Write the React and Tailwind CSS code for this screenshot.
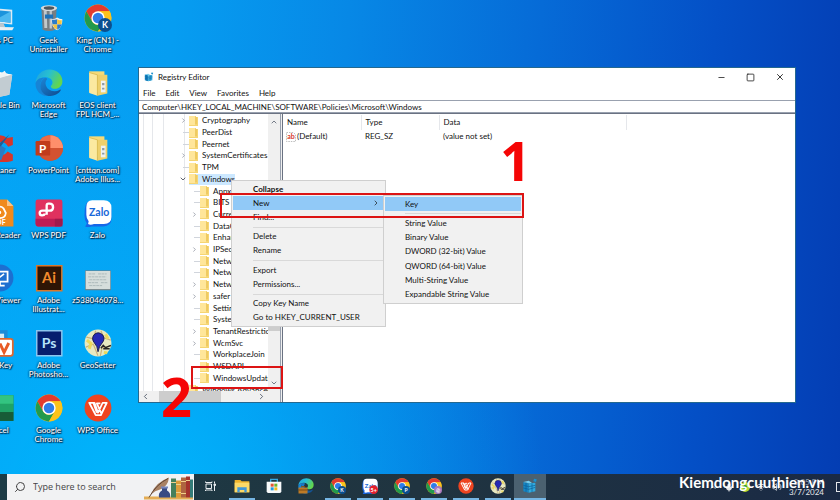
import { ChevronDown, ChevronLeft, ChevronRight, ChevronUp, Mic, Minus, Search, Square, Volume2, Wifi, X } from 'lucide-react';

/* ---------- app icons ---------- */

function Chrome({ badge, badgeFill = '#0b4f8f' }) {
  return (
    <svg viewBox="0 0 48 48" className="size-full">
      <circle cx="24" cy="24" r="23" fill="#fbc116" />
      <path d="M4.1 12.5A23 23 0 0 1 43.9 12.5L24 12.5L14 29.8Z" fill="#e33b2e" />
      <path d="M4.1 12.5A23 23 0 0 0 24 47L34 29.7A11.5 11.5 0 0 1 14 29.8Z" fill="#229a4c" />
      <path d="M43.9 12.5H24A11.5 11.5 0 0 1 34 29.7L24 47A23 23 0 0 0 43.9 12.5Z" fill="#fcc31c" />
      <circle cx="24" cy="24" r="11.5" fill="#fff" />
      <circle cx="24" cy="24" r="9" fill="#2f7de8" />
      {badge && (
        <>
          <circle cx="36" cy="36" r="12" fill={badgeFill} />
          <text x="36" y="41" textAnchor="middle" fontSize="15" fontWeight="700" fill="#fff">{badge}</text>
        </>
      )}
    </svg>
  );
}

function Edge() {
  return (
    <svg viewBox="0 0 48 48" className="size-full">
      <defs>
        <linearGradient id="edgeTop" x1="0" y1="0" x2="1" y2="0.4">
          <stop offset="0" stopColor="#1f9fe0" />
          <stop offset="0.5" stopColor="#27bfd2" />
          <stop offset="1" stopColor="#62d64f" />
        </linearGradient>
        <linearGradient id="edgeLow" x1="0" y1="0" x2="1" y2="1">
          <stop offset="0" stopColor="#1b86d8" />
          <stop offset="1" stopColor="#104a8c" />
        </linearGradient>
      </defs>
      <path d="M1 24C2 10 12 1 25 1c13 0 22 9 22 20 0 8-6 13-13 13-5 0-7-2-7-4s3-3 3-7c0-5-5-9-12-9C9 14 3 18 1 24Z" fill="url(#edgeTop)" />
      <path d="M1 24c2-6 8-10 16-9-5 2-8 7-8 13 0 10 8 18 18 18C12 49 0 38 1 24Z" fill="#1784d6" />
      <path d="M17 15c-6 4-8 9-8 14 0 11 10 19 20 17 7-1 13-5 15-9 1-2-1-2-2-1-9 5-23 1-24-11 0-3 1-6 3-8-1-1-2-2-4-2Z" fill="url(#edgeLow)" />
    </svg>
  );
}

function ThisPc() {
  return (
    <svg viewBox="0 0 48 48" className="size-full">
      <path d="M4 6l41 4v25L4 31z" fill="#dcebf4" />
      <path d="M7 9l35 4v19L7 28z" fill="#1b93dc" />
      <path d="M12 29L42 13v19z" fill="#4bb8f0" />
      <path d="M18 32l12 1 3 7H14z" fill="#b9c6ce" />
      <path d="M6 39l42 1-3 5H3z" fill="#e9eff2" />
    </svg>
  );
}

function Geek() {
  return (
    <svg viewBox="0 0 48 48" className="size-full">
      <path d="M11 7h26l-2 37q-11 5-22 0z" fill="#777e83" />
      <path d="M15 11h5l1 30h-5zM25 11h4v31h-4z" fill="#c1c8cb" />
      <ellipse cx="24" cy="7" rx="14" ry="5" fill="#d6dadc" />
      <ellipse cx="24" cy="7" rx="9" ry="3" fill="#4c565d" />
      <path d="M17 18h14v7H17z" fill="#1d72bb" />
      <path d="M28 26q7 0 10-3 4 3 9 3 0 14-9 19-10-5-10-19z" fill="#f3f3f3" />
      <path d="M38 26v9h-8q-1-3-1-8 5 0 9-1z" fill="#2c7bc9" />
      <path d="M38 26q4 2 8 2l-.5 7H38zM30 35h8v9q-6-3-8-9z" fill="#f6c33a" />
      <path d="M38 35h8q-2 6-8 9z" fill="#2c7bc9" />
    </svg>
  );
}

function RecycleBin() {
  return (
    <svg viewBox="0 0 48 48" className="size-full">
      <path d="M3 10l18-5 24 5-5 34-19 4-13-5z" fill="#dce4e8" />
      <path d="M3 10l19 5 23-5-24-5z" fill="#f9fbfc" />
      <path d="M22 15l23-5-5 34-19 4z" fill="#c2ccd2" />
      <path d="M10 13l7-8 7 4 8-6 5 8-15 5z" fill="#eef3f5" />
    </svg>
  );
}

function ZipFolder() {
  return (
    <svg viewBox="0 0 48 48" className="size-full">
      <path d="M9 4h26v36H9z" fill="#f4da79" />
      <path d="M9 6l14 4v36L9 41z" fill="#fbe9a0" />
      <path d="M23 10h17v32l-17 4z" fill="#eed06b" />
      <path d="M29 20h8v20h-8z" fill="#edf2f3" />
      <path d="M31 24h4v4h-4zM31 32h4v3h-4z" fill="#8f9ba2" />
      <path d="M9 6l14 4v36" fill="none" stroke="#d9b950" strokeWidth="1.5" />
    </svg>
  );
}

function CCleaner() {
  return (
    <svg viewBox="0 0 48 48" className="size-full">
      <path d="M46 5v14l-8 3q-5-9-13-8-11 2-10 12 1 9 11 10 7 0 11-6l9 5v11q-9 3-20 2Q2 46 1 25 3 4 24 2q7 0 12 5z" fill="#d6362b" />
      <path d="M40 1L25 22l-8 21-5-2 7-21z" fill="#225d94" />
      <path d="M26 20l8 5-8 20-16-7z" fill="#2b7bc0" />
    </svg>
  );
}

function PowerPoint() {
  return (
    <svg viewBox="0 0 48 48" className="size-full">
      <circle cx="26" cy="24" r="22" fill="#d35230" />
      <path d="M26 2a22 22 0 0 1 22 22H26z" fill="#ff8f6b" />
      <path d="M4 24h44a22 22 0 0 1-44 0z" fill="#d35230" />
      <path d="M4 24a22 22 0 0 1 22-22v22z" fill="#ed6c47" />
      <rect x="1" y="12" width="25" height="25" rx="2" fill="#c13b1b" />
      <text x="13" y="32" textAnchor="middle" fontSize="20" fontWeight="700" fill="#fff">P</text>
    </svg>
  );
}

function FoxitReader() {
  return (
    <svg viewBox="0 0 48 48" className="size-full">
      <path d="M2 1h34l11 11v35H2z" fill="#f08a1d" />
      <path d="M36 1l11 11H36z" fill="#fbc486" />
      <path d="M9 14q4 3 9 1 7-4 12 1l4 8q-1 9-11 9-13 0-14-19z" fill="none" stroke="#fff" strokeWidth="3" />
      <circle cx="23" cy="23" r="3" fill="#fff" />
      <text x="22" y="45" textAnchor="middle" fontSize="12" fontWeight="700" fill="#fff">PDF</text>
    </svg>
  );
}

function WpsPdf() {
  return (
    <svg viewBox="0 0 48 48" className="size-full">
      <rect x="1" y="1" width="46" height="46" rx="4" fill="#e0315f" />
      <path d="M1 34h46v9q0 4-4 4H5q-4 0-4-4z" fill="#bd1c54" />
      <path d="M34 34h13v13H34z" fill="#9e1a4c" />
      <path d="M20 27V11q0-3 3-3h2q6 0 6 6t-6 6h-12q-5 0-5 4t4 4q4 0 5-3" fill="none" stroke="#fff" strokeWidth="4" />
    </svg>
  );
}

function Zalo({ badge }) {
  return (
    <svg viewBox="0 0 48 48" className="size-full">
      <path d="M8 4h28q11 2 11 14v16q0 13-14 13H13q-7 2-11 0l3-5Q0 36 1 25 1 7 8 4z" fill="#1767e8" />
      <path d="M14 2h20q13 0 13 13v16q0 12-13 12H17q-6 2-10 0l1-5q-4-4-4-11V14Q4 2 14 2z" fill="#fff" />
      <text x="26" y="29" textAnchor="middle" fontSize="18" fontWeight="700" fill="#1767d8">Zalo</text>
      {badge && (
        <>
          <circle cx="35" cy="35" r="13" fill="#e5202c" />
          <text x="35" y="41" textAnchor="middle" fontSize="16" fontWeight="700" fill="#fff">{badge}</text>
        </>
      )}
    </svg>
  );
}

function UltraViewer() {
  return (
    <svg viewBox="0 0 48 48" className="size-full">
      <circle cx="24" cy="24" r="23" fill="#1d6fd0" />
      <path d="M11 13h26v17H11z" fill="none" stroke="#fff" strokeWidth="3" />
      <path d="M24 30v7M16 37h16M19 26l12-9" stroke="#fff" strokeWidth="3" />
    </svg>
  );
}

function Illustrator() {
  return (
    <svg viewBox="0 0 48 48" className="size-full">
      <path d="M3 3h43v43H3z" fill="#2e1505" stroke="#d9772a" strokeWidth="2.500" />
      <text x="24" y="33" textAnchor="middle" fontSize="25" fontWeight="700" fill="#f28a2c">Ai</text>
    </svg>
  );
}

function Photoshop() {
  return (
    <svg viewBox="0 0 48 48" className="size-full">
      <path d="M3 3h43v43H3z" fill="#061e6e" stroke="#8cc6ee" strokeWidth="2.500" />
      <text x="24" y="32" textAnchor="middle" fontSize="24" fontWeight="700" fill="#b5e2fb">Ps</text>
    </svg>
  );
}

function PhotoFile() {
  return (
    <svg viewBox="0 0 48 48" className="size-full">
      <path d="M2 11h44v34H2z" fill="#70828a" />
      <path d="M3 12h42v31H3z" fill="#d6dedc" />
      <path d="M8 17h12M24 17h15M7 22h31M9 27h29M7 32h18M29 32h11M9 37h22" stroke="#a8b6b7" strokeWidth="1.500" strokeDasharray="5 1" />
    </svg>
  );
}

function UniKey() {
  return (
    <svg viewBox="0 0 48 48" className="size-full">
      <path d="M8 2h29v28H8z" fill="#1a8bd8" />
      <path d="M14 8h17v16H14z" fill="#d4edf8" />
      <rect x="18" y="17" width="28" height="29" rx="4" fill="#fff" stroke="#e1672e" strokeWidth="3" />
      <path d="M24 25l7 15 8-16" fill="none" stroke="#e85b25" strokeWidth="5" />
    </svg>
  );
}

function GeoSetter() {
  return (
    <svg viewBox="0 0 48 48" className="size-full">
      <circle cx="24" cy="24" r="23" fill="#e8e9c2" />
      <path d="M4 14l12 3 4-14M3 31l13-5 8 20M29 3l5 12 12 4M28 46l3-14 16-3" fill="none" stroke="#cbb27d" strokeWidth="2" />
      <path d="M5 19l7 6-3 9M37 9l4 8M34 40l6 1" fill="none" stroke="#ecd95c" strokeWidth="5" />
      <path d="M24 39q-1-10-6-15-6-7-1-14 7-7 15 0 5 7-1 14-5 5-7 15z" fill="#2629b5" stroke="#121546" strokeWidth="1.500" />
      <path d="M29 33l4-5 4 4 9-4M33 34h11" fill="none" stroke="#252525" strokeWidth="2.500" />
    </svg>
  );
}

function Excel() {
  return (
    <svg viewBox="0 0 48 48" className="size-full">
      <path d="M1 2h46v44H1z" fill="#107c41" />
      <path d="M24 2h23v15H24z" fill="#33c481" />
      <path d="M24 17h23v14H24z" fill="#21a366" />
      <path d="M24 31h23v15H24z" fill="#185c37" />
    </svg>
  );
}

function WpsOffice() {
  return (
    <svg viewBox="0 0 48 48" className="size-full">
      <circle cx="24" cy="24" r="23" fill="#ee4420" />
      <path d="M9 15h9l6 17 8-17h7L29 36h-9zM16 15l6 17M28 16h-6l8 18" fill="none" stroke="#fff" strokeWidth="3" strokeLinejoin="round" />
    </svg>
  );
}

function TaskView() {
  return (
    <svg viewBox="0 0 24 24" className="size-full" fill="none" stroke="#e8edf0" strokeWidth="2">
      <path d="M4 8h11v9H4zM3 3v2h13V3M3 22v-2h13v2M21 3v4M21 12v10" />
      <path d="M20 8h3v3h-3z" fill="#e8edf0" />
    </svg>
  );
}

function Explorer() {
  return (
    <svg viewBox="0 0 48 48" className="size-full">
      <path d="M2 6h17l4 4h23v33H2z" fill="#eeb32c" />
      <path d="M2 14h44v29H2z" fill="#fbd968" />
      <path d="M10 28h28v15h-7v-7H17v7h-7z" fill="#3f97d8" />
    </svg>
  );
}

function Store() {
  return (
    <svg viewBox="0 0 48 48" className="size-full">
      <path d="M14 12V4h20v8" fill="none" stroke="#38a9e0" strokeWidth="4" />
      <path d="M2 11h44v29q0 5-5 5H7q-5 0-5-5z" fill="#f8fafb" />
      <path d="M14 17h9v9h-9z" fill="#e75432" />
      <path d="M25 17h9v9h-9z" fill="#70b52b" />
      <path d="M14 28h9v9h-9z" fill="#219ce0" />
      <path d="M25 28h9v9h-9z" fill="#f5b91c" />
    </svg>
  );
}

function EdgeWork() {
  return (
    <span className="relative block size-full">
      <Edge />
      <svg viewBox="0 0 20 16" className="absolute bottom-0 left-0 h-2 w-2.5">
        <path d="M7 3V1h6v2" fill="none" stroke="#8a5413" strokeWidth="2" />
        <path d="M1 3h18v12H1z" fill="#bd7a26" />
        <path d="M1 8h18" stroke="#7a4a14" strokeWidth="2" />
      </svg>
    </span>
  );
}

function Regedit() {
  return (
    <svg viewBox="0 0 24 24" className="size-full">
      <path d="M2 6l8 2v14l-8-2z" fill="#1686c4" />
      <path d="M10 8l10-1v13l-10 2z" fill="#31a9dd" />
      <path d="M2 6l8-2 5 3-5 1z" fill="#76cdee" />
      <path d="M2 11l8 2 10-2M2 15l8 2 10-3M6 7v14M15 8v13" fill="none" stroke="#0b5f98" strokeWidth="1" />
      <path d="M18 1l4 1-1 4-4-1z" fill="#1d90cd" />
    </svg>
  );
}

function StringValue() {
  return (
    <svg viewBox="0 0 20 20" className="size-2.5 shrink-0">
      <path d="M1 1h14l4 4v14H1z" fill="#fff" stroke="#a8a8a8" strokeWidth="1.500" strokeDasharray="3 2" />
      <text x="10" y="14" textAnchor="middle" fontSize="14" fontWeight="700" fill="#d8362a">ab</text>
    </svg>
  );
}

function SearchArt() {
  return (
    <svg viewBox="0 0 50 25" className="h-full w-[50px]">
      <path d="M0 22h49v3H0z" fill="#e4ad55" />
      <path d="M7 20Q11 8 25 3q-1 9-9 12-5 1-9 5z" fill="#a98264" />
      <path d="M5 23Q12 10 24 4" fill="none" stroke="#604535" strokeWidth="1" />
      <path d="M18 13h5v3q4 2 3 7H15q-1-5 3-7z" fill="#384b83" />
      <path d="M17 12h7v2h-7z" fill="#7586bd" />
      <path d="M27 4h5v19h-5z" fill="#45805c" />
      <path d="M32 6h5v17h-5z" fill="#dd9c3a" />
      <path d="M37 3h5v20h-5z" fill="#ae6540" />
      <path d="M42 2h4v21h-4z" fill="#a5332d" />
      <path d="M46 5h3v18h-3z" fill="#347c78" />
      <path d="M27 8h5M32 10h5M37 7h5M42 6h4M32 18h5M37 19h5" stroke="#f0d18c" strokeWidth="1" />
    </svg>
  );
}

/* ---------- data ---------- */

const shortcuts = [
  { icon: <ThisPc />, label: ['This PC'] },
  { icon: <Geek />, label: ['Geek', 'Uninstaller'] },
  { icon: <Chrome badge="K" />, label: ['King (CN1) -', 'Chrome'] },
  { icon: <RecycleBin />, label: ['Recycle Bin'] },
  { icon: <Edge />, label: ['Microsoft', 'Edge'] },
  { icon: <ZipFolder />, label: ['EOS client', 'FPL HCM_...'] },
  { icon: <CCleaner />, label: ['CCleaner'] },
  { icon: <PowerPoint />, label: ['PowerPoint'] },
  { icon: <ZipFolder />, label: ['[cnttqn.com]', 'Adobe Illus...'] },
  { icon: <FoxitReader />, label: ['PDF Reader'] },
  { icon: <WpsPdf />, label: ['WPS PDF'] },
  { icon: <Zalo />, label: ['Zalo'] },
  { icon: <UltraViewer />, label: ['UltraViewer'] },
  { icon: <Illustrator />, label: ['Adobe', 'Illustrat...'] },
  { icon: <PhotoFile />, label: ['z538046078...'] },
  { icon: <UniKey />, label: ['UniKey'] },
  { icon: <Photoshop />, label: ['Adobe', 'Photosho...'] },
  { icon: <GeoSetter />, label: ['GeoSetter'] },
  { icon: <Excel />, label: ['Excel'] },
  { icon: <Chrome />, label: ['Google', 'Chrome'] },
  { icon: <WpsOffice />, label: ['WPS Office'] },
];

const keys = [
  { name: 'Cryptography', more: true },
  { name: 'PeerDist' },
  { name: 'Peernet' },
  { name: 'SystemCertificates', more: true },
  { name: 'TPM' },
  { name: 'Windows', open: true },
  { name: 'Appx', child: true },
  { name: 'BITS', child: true },
  { name: 'CurrentVersion', child: true, more: true },
  { name: 'DataCollection', child: true },
  { name: 'EnhancedStorage', child: true },
  { name: 'IPSec', child: true, more: true },
  { name: 'Network Connect', child: true },
  { name: 'NetworkConnect', child: true },
  { name: 'NetworkProvider', child: true, more: true },
  { name: 'safer', child: true, more: true },
  { name: 'SettingSync', child: true },
  { name: 'System', child: true },
  { name: 'TenantRestrictions', child: true, more: true },
  { name: 'WcmSvc', child: true, more: true },
  { name: 'WorkplaceJoin', child: true },
  { name: 'WSDAPI', child: true },
  { name: 'WindowsUpdate', child: true },
  { name: 'Windows Advanced', more: true },
];

const contextItems = ['Collapse', 'New', 'Find...', '-', 'Delete', 'Rename', '-', 'Export', 'Permissions...', '-', 'Copy Key Name', 'Go to HKEY_CURRENT_USER'];
const newItems = ['Key', '-', 'String Value', 'Binary Value', 'DWORD (32-bit) Value', 'QWORD (64-bit) Value', 'Multi-String Value', 'Expandable String Value'];

const pinned = [
  { name: 'Task View', icon: <TaskView />, size: 'size-3' },
  { name: 'File Explorer', icon: <Explorer />, running: true },
  { name: 'Microsoft Store', icon: <Store /> },
  { name: 'Microsoft Edge', icon: <EdgeWork /> },
  { name: 'Chrome K', icon: <Chrome badge="K" />, running: true },
  { name: 'Zalo', icon: <Zalo badge="5+" />, running: true },
  { name: 'Chrome P', icon: <Chrome badge="P" />, running: true },
  { name: 'Chrome', icon: <Chrome badge="@" badgeFill="#a779bd" />, running: true },
  { name: 'WPS Office', icon: <WpsOffice />, running: true },
  { name: 'GeoSetter', icon: <GeoSetter />, running: true },
  { name: 'Registry Editor', icon: <Regedit />, running: true, active: true },
];

/* ---------- desktop ---------- */

function Shortcut({ icon, label }) {
  return (
    <button className="flex flex-col items-center text-white">
      <span className="size-7">{icon}</span>
      <span className="mt-1 flex flex-col items-center text-[8px] leading-[9px] font-medium whitespace-nowrap [text-shadow:1px_1px_1px_#00203f,0_0_2px_#002b52,0_0_2px_#002b52]">
        {label.map(line => <span key={line}>{line}</span>)}
      </span>
    </button>
  );
}

function FolderIcon() {
  return (
    <svg viewBox="0 0 9 10" className="h-2.5 w-[9px] shrink-0">
      <path d="M0 0h7v1h2v9H0z" fill="#f5d573" />
      <path d="M0 0h6v9H0z" fill="#ffe69a" />
      <path d="M7 1v7" stroke="#e8c053" strokeWidth="1" />
    </svg>
  );
}

function TreeRow({ item }) {
  return (
    <li className={`flex min-h-0 flex-1 items-center ${item.child ? 'pl-[49px]' : 'pl-[38px]'}`}>
      <span className="flex w-3 shrink-0 items-center justify-center text-gray-500">
        {item.open && <ChevronDown size={8} className="text-gray-900" />}
        {item.more && <ChevronRight size={7} />}
        {!item.open && !item.more && <span className="ml-1.5 h-px w-1.5 bg-gray-300" />}
      </span>
      <span className={`flex items-center gap-1 whitespace-nowrap ${item.open ? 'bg-[#cce8ff]' : ''}`}>
        <FolderIcon />
        {item.name}
      </span>
    </li>
  );
}

function KeyTree() {
  return (
    <div className="flex w-[141px] shrink-0 flex-col overflow-hidden">
      <div className="flex min-h-0 flex-1">
        <div className="relative min-w-0 flex-1 overflow-hidden">
          <div className="absolute inset-y-0 left-1 w-2.5 border-x border-gray-200" />
          <div className="absolute inset-y-0 left-6 w-[22px] border-x border-gray-200" />
          <ul className="relative mt-px flex h-[281px] flex-col">
            {keys.map(k => <TreeRow key={k.name} item={k} />)}
          </ul>
        </div>
        <div className="flex w-3 shrink-0 flex-col items-center bg-[#f0f0f0] py-1 text-gray-700">
          <ChevronUp size={8} />
          <div className="mt-[197px] h-2 w-full bg-[#cdcdcd]" />
          <ChevronDown size={8} className="mt-auto" />
        </div>
      </div>
      <div className="flex h-[11px] shrink-0 items-center bg-[#f0f0f0] px-0.5 text-gray-700">
        <ChevronLeft size={9} />
        <div className="ml-[9px] h-full w-[62px] bg-[#cdcdcd]" />
        <ChevronRight size={9} className="mr-3 ml-auto" />
      </div>
    </div>
  );
}

function ValueList() {
  return (
    <div className="min-w-0 flex-1 border-l border-gray-500 pt-px">
      <table className="w-full table-fixed text-left">
        <thead>
          <tr className="h-[15px]">
            <th className="w-[78px] border-r border-gray-200 pl-1 font-normal">Name</th>
            <th className="w-[78px] border-r border-gray-200 pl-1 font-normal">Type</th>
            <th className="w-[187px] border-r border-gray-200 pl-1 font-normal">Data</th>
            <th aria-label="Spare" />
          </tr>
        </thead>
        <tbody>
          <tr className="h-[13px]">
            <td className="pl-[3px]">
              <span className="flex items-center gap-px">
                <StringValue />
                (Default)
              </span>
            </td>
            <td className="pl-1">REG_SZ</td>
            <td className="pl-1">(value not set)</td>
            <td />
          </tr>
        </tbody>
      </table>
    </div>
  );
}

function Menu({ items, active, strong, arrow, className }) {
  return (
    <div role="menu" className={`absolute flex flex-col border border-[#cfcfcf] bg-[#f1f1f1] p-px ${className}`}>
      {items.map((item, i) => item === '-' ? (
        <hr key={i} className="my-0.5 ml-5 border-[#d9d9d9]" />
      ) : (
        <button
          key={item}
          role="menuitem"
          className={`flex min-h-0 flex-1 items-center justify-between pr-1 pl-5 text-left ${item === active ? 'bg-[#91c9f7]' : ''} ${item === strong ? 'font-bold' : ''}`}
        >
          {item}
          {item === arrow && <ChevronRight size={8} />}
        </button>
      ))}
    </div>
  );
}

function RegistryWindow() {
  return (
    <section className="relative mt-[67px] mr-11 flex h-[336px] min-w-0 flex-1 flex-col border border-[#24688f] bg-white text-[8px] leading-[11px] text-[#111]">
      <header className="flex h-[18px] shrink-0 items-center pl-[5px]">
        <span className="size-2.5"><Regedit /></span>
        <h1 className="ml-1">Registry Editor</h1>
        <div className="ml-auto flex gap-5 pr-2.5 text-[#111]">
          <button aria-label="Minimize"><Minus size={9} /></button>
          <button aria-label="Maximize"><Square size={9} /></button>
          <button aria-label="Close"><X size={10} /></button>
        </div>
      </header>
      <nav className="flex h-3.5 shrink-0 items-center gap-2.5 pl-1">
        {['File', 'Edit', 'View', 'Favorites', 'Help'].map(m => <button key={m}>{m}</button>)}
      </nav>
      <input
        aria-label="Key path"
        className="h-[13px] shrink-0 border-y border-gray-400 px-[3px] outline-none"
        defaultValue="Computer\HKEY_LOCAL_MACHINE\SOFTWARE\Policies\Microsoft\Windows"
      />
      <div className="flex min-h-0 flex-1 border-t border-gray-500">
        <KeyTree />
        <div className="w-0.5 shrink-0 border-l border-gray-400 bg-[#f0f0f0]" />
        <ValueList />
      </div>

      <Menu items={contextItems} active="New" strong="Collapse" arrow="New" className="top-[112px] left-[92px] h-[147px] w-[155px]" />
      <Menu items={newItems} active="Key" className="top-[127px] left-[244px] h-[109px] w-[140px]" />

      {/* Step markers */}
      <div className="absolute top-[125px] left-[81px] h-[25px] w-[304px] border-2 border-[#dc1414]" />
      <div className="absolute top-[298px] left-[52px] h-[23px] w-[92px] border-2 border-[#dc1414]" />
      <span className="absolute top-[65px] left-[361px] font-['Open_Sans',sans-serif] text-[54px] leading-[54px] font-bold text-[#f50505]">1</span>
      <span className="absolute top-[301px] left-[22px] font-['Open_Sans',sans-serif] text-[54px] leading-[54px] font-bold text-[#f50505]">2</span>
    </section>
  );
}

function Taskbar() {
  return (
    <footer className="relative flex h-[26px] shrink-0 bg-linear-to-r from-[#1c3b45] via-[#203440] to-[#1a2a45] pl-[7px] text-white">
      <label className="flex w-[187px] shrink-0 items-center bg-[#f1f2f3] text-[#444]">
        <Search size={12} className="ml-[7px] shrink-0 -scale-x-100" />
        <input aria-label="Search" placeholder="Type here to search" className="ml-[7px] w-0 flex-1 font-['Open_Sans',sans-serif] text-[9px] outline-none placeholder:text-[#444]" />
        <SearchArt />
      </label>
      <div className="flex">
        {pinned.map(app => (
          <button key={app.name} aria-label={app.name} className={`flex w-8 flex-col items-center ${app.active ? 'bg-[#4b6170]' : ''}`}>
            <span className="flex flex-1 items-center">
              <span className={app.size || 'size-4'}>{app.icon}</span>
            </span>
            <span className={`h-0.5 ${app.active ? 'w-full' : 'w-[26px]'} ${app.running ? 'bg-[#76b6e4]' : ''}`} />
          </button>
        ))}
      </div>
      <div className="ml-auto flex items-center text-gray-200">
        <div className="grid grid-cols-5 place-items-center *:w-4">
          <ChevronUp size={9} />
          <Mic size={9} fill="currentColor" />
          <span className="flex justify-center">
            <span className="flex size-2.5 items-center justify-center rounded-full bg-[#b5d82c]">
              <span className="size-1 rounded-full bg-[#20974a]" />
            </span>
          </span>
          <Wifi size={10} />
          <Volume2 size={10} />
        </div>
        <div className="ml-1 flex flex-col items-end text-[8px] leading-[10px]">
          <time className="text-gray-400">8:05 PM</time>
          <time>3/7/2024</time>
        </div>
        <span className="ml-3 h-2.5 w-1 border border-r-0 border-gray-200" />
      </div>
      <strong className="absolute top-0 right-[15px] text-[15px] leading-4 font-bold">Kiemdongcuuthien.vn</strong>
    </footer>
  );
}

export default function App() {
  return (
    <div className="flex h-screen flex-col overflow-hidden bg-[radial-gradient(circle_at_15%_100%,#00b5fc_0%,#00b0fa80_22%,transparent_48%),linear-gradient(94deg,#05a2f5_0%,#069df1_20%,#0788e6_40%,#066bd7_62%,#0450c7_82%,#043db3_100%)] font-[Lato,'Open_Sans',sans-serif]">
      <main className="flex min-h-0 flex-1 items-start">
        <div className="w-[138px] shrink-0">
          <div className="-ml-[25px] grid w-[147px] auto-rows-[65px] grid-cols-3 pt-1">
            {shortcuts.map(s => <Shortcut key={s.label.join(' ')} {...s} />)}
          </div>
        </div>
        <RegistryWindow />
      </main>
      <Taskbar />
    </div>
  );
}
